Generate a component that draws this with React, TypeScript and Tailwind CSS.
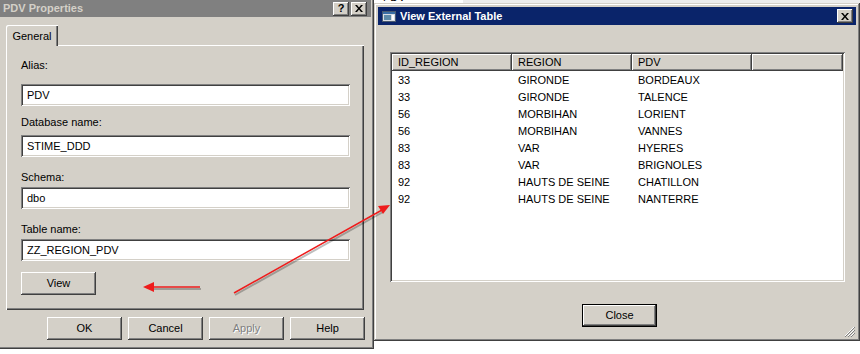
import React from "react";

const FONT = { fontFamily: '"Liberation Sans", Arial, sans-serif' };

const RAISED =
  "shadow-[inset_-1px_-1px_#404040,inset_1px_1px_#ffffff,inset_-2px_-2px_#808080]";
const SUNKEN =
  "shadow-[inset_1px_1px_#808080,inset_-1px_-1px_#ffffff,inset_2px_2px_#404040,inset_-2px_-2px_#d4d0c8]";

const ROWS = [
  ["33", "GIRONDE", "BORDEAUX"],
  ["33", "GIRONDE", "TALENCE"],
  ["56", "MORBIHAN", "LORIENT"],
  ["56", "MORBIHAN", "VANNES"],
  ["83", "VAR", "HYERES"],
  ["83", "VAR", "BRIGNOLES"],
  ["92", "HAUTS DE SEINE", "CHATILLON"],
  ["92", "HAUTS DE SEINE", "NANTERRE"],
];

function Btn({
  label,
  disabled,
  className = "",
}: {
  label: string;
  disabled?: boolean;
  className?: string;
}) {
  return (
    <div
      className={`flex h-[23px] w-[75px] items-center justify-center bg-[#d4d0c8] ${RAISED} ${className}`}
    >
      <span
        className={
          disabled
            ? "text-[#808080] [text-shadow:1px_1px_#ffffff]"
            : "text-black"
        }
      >
        {label}
      </span>
    </div>
  );
}

function CapBtn({ children }: { children: React.ReactNode }) {
  return (
    <div
      className={`flex h-[14px] w-[16px] items-center justify-center bg-[#d4d0c8] ${RAISED}`}
    >
      {children}
    </div>
  );
}

function CloseGlyph() {
  return (
    <svg width="8" height="7" viewBox="0 0 8 7">
      <path d="M0 0h2l2 2.5L6 0h2L5 3.5 8 7H6L4 4.5 2 7H0l3-3.5z" fill="#000" />
    </svg>
  );
}

function Field({
  label,
  value,
  labelTop,
  gap,
}: {
  label: string;
  value: string;
  labelTop: number;
  gap: number;
}) {
  return (
    <div style={{ marginTop: labelTop }}>
      <div className="h-[13px] leading-[13px]">{label}</div>
      <div
        className={`flex h-[22px] w-[329px] items-center bg-white pl-[6px] ${SUNKEN}`}
        style={{ marginTop: gap }}
      >
        {value}
      </div>
    </div>
  );
}

function PropertiesDialog() {
  return (
    <div className="h-[349px] w-[374px] shrink-0 bg-[#d4d0c8] shadow-[inset_-1px_-1px_#404040,inset_-2px_-2px_#808080]">
      <div className="mr-[3px] flex h-[17px] items-center justify-between bg-[#808080] pl-[3px] pr-[4px]">
        <span className="font-bold text-[#d4d0c8]">PDV Properties</span>
        <div className="flex gap-[2px]">
          <CapBtn>
            <span className="text-[11px] font-bold leading-none text-black">?</span>
          </CapBtn>
          <CapBtn>
            <CloseGlyph />
          </CapBtn>
        </div>
      </div>

      <div className="ml-[6px] mt-[8px] w-[358px]">
        <div className="relative z-10 -mb-px flex h-[21px] w-[52px] items-center justify-center rounded-tl-[2px] bg-[#d4d0c8] pt-[2px] shadow-[inset_1px_1px_#ffffff,inset_-1px_0_#404040,inset_-2px_0_#808080]">
          General
        </div>
        <div className="h-[265px] bg-[#d4d0c8] pl-[15px] pt-px shadow-[inset_1px_1px_#ffffff,inset_-1px_-1px_#404040,inset_-2px_-2px_#808080]">
          <Field label="Alias:" value="PDV" labelTop={13} gap={12} />
          <Field label="Database name:" value="STIME_DDD" labelTop={10} gap={6} />
          <Field label="Schema:" value="dbo" labelTop={14} gap={3} />
          <Field label="Table name:" value="ZZ_REGION_PDV" labelTop={14} gap={3} />
          <Btn label="View" className="mt-[11px] h-[22px]" />
        </div>
      </div>

      <div className="mt-[7px] flex justify-end gap-[6px] pr-[9px]">
        <Btn label="OK" />
        <Btn label="Cancel" />
        <Btn label="Apply" disabled />
        <Btn label="Help" />
      </div>
    </div>
  );
}

function TableDialog() {
  const cols = ["ID_REGION", "REGION", "PDV"];
  return (
    <div className="flex w-[486px] flex-col">
      <div className="flex h-[3px] overflow-hidden bg-[#ececec]">
        <div className="relative h-[3px] w-[89px] overflow-hidden bg-white">
          <span className="absolute left-[9px] top-[-9px] leading-[13px]">PDV</span>
        </div>
      </div>
      <div className="relative h-[338px] bg-[#d4d0c8] px-[4px] pt-[4px] shadow-[inset_-1px_-1px_#404040,inset_1px_1px_#d4d0c8,inset_-2px_-2px_#808080,inset_2px_2px_#ffffff]">
        <div className="flex h-[18px] items-center justify-between bg-[#0a246a] pl-[4px] pr-[3px]">
          <div className="flex items-center gap-[4px]">
            <svg width="14" height="11" viewBox="0 0 14 11">
              <rect x="0.5" y="0.5" width="13" height="10" fill="#d8dce4" stroke="#4a5a70" />
              <rect x="1" y="1" width="12" height="2" fill="#3a6ea5" />
              <rect x="2" y="4" width="7" height="5" fill="#5d8aa8" />
              <rect x="10" y="4" width="2" height="5" fill="#ffffff" />
            </svg>
            <span className="font-bold text-white">View External Table</span>
          </div>
          <CapBtn>
            <CloseGlyph />
          </CapBtn>
        </div>

        <div
          className={`ml-[12px] mt-[27px] h-[230px] w-[455px] bg-white p-[2px] ${SUNKEN}`}
        >
          <div className="flex h-[17px]">
            {cols.map((c) => (
              <div
                key={c}
                className={`flex h-[17px] w-[120px] items-center bg-[#d4d0c8] pl-[6px] ${RAISED}`}
              >
                {c}
              </div>
            ))}
            <div className={`h-[17px] flex-1 bg-[#d4d0c8] ${RAISED}`} />
          </div>
          {ROWS.map((r, i) => (
            <div key={i} className="flex h-[17px] items-center pt-px">
              {r.map((v, j) => (
                <div key={j} className="w-[120px] pl-[6px] text-black">
                  {v}
                </div>
              ))}
            </div>
          ))}
        </div>

        <div className="ml-[204px] mt-[22px] flex h-[23px] w-[75px] items-center justify-center bg-[#d4d0c8] shadow-[inset_0_0_0_1px_#000000,inset_-2px_-2px_#404040,inset_2px_2px_#ffffff,inset_-3px_-3px_#808080]">
          Close
        </div>

        <svg
          className="absolute bottom-[4px] right-[5px]"
          width="11"
          height="11"
          viewBox="0 0 11 11"
        >
          <path d="M10 1L1 10M10 4L4 10M10 7L7 10" stroke="#ffffff" strokeWidth="1" />
          <path d="M11 1L1 11M11 4L4 11M11 7L7 11" stroke="#808080" strokeWidth="1" />
        </svg>
      </div>
    </div>
  );
}

export default function App() {
  return (
    <div
      className="relative flex h-[354px] w-[860px] items-start overflow-hidden bg-white text-[11px] leading-[13px] text-black"
      style={FONT}
    >
      <PropertiesDialog />
      <TableDialog />
      <svg
        className="pointer-events-none absolute inset-0"
        width="860"
        height="354"
        viewBox="0 0 860 354"
      >
        <g opacity="0.25" transform="translate(1 2)">
          <line x1="234" y1="293" x2="382" y2="210" stroke="#000" strokeWidth="2" />
          <line x1="200" y1="287" x2="152" y2="287" stroke="#000" strokeWidth="2" />
        </g>
        <line x1="234" y1="293" x2="382" y2="210" stroke="#ee1c1c" strokeWidth="1.5" />
        <polygon points="390,205 378,206 383,214" fill="#ee1c1c" />
        <line x1="200" y1="287" x2="152" y2="287" stroke="#ee1c1c" strokeWidth="1.5" />
        <polygon points="143,287 154,282 154,292" fill="#ee1c1c" />
      </svg>
    </div>
  );
}
